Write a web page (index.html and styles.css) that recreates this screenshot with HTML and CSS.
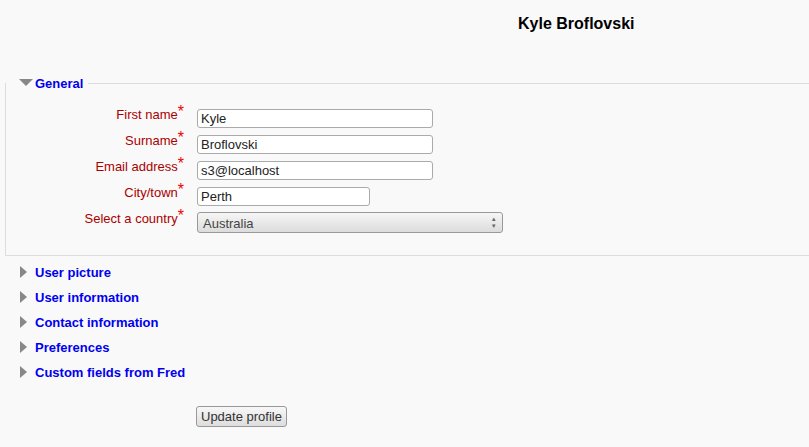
FILE: index.html
```html
<!DOCTYPE html>
<html lang="en">
<head>
    <meta charset="UTF-8">
    <title>Kyle Broflovski</title>
    <link rel="stylesheet" href="styles.css">
</head>
<body>
    <h2 class="username">Kyle Broflovski</h2>
    <form class="mform">
        <fieldset class="section">
            <legend><span class="toggle open"></span><a href="#">General</a></legend>
            <div class="row">
                <label>First name<span class="req">*</span></label>
                <input type="text" class="text" value="Kyle">
            </div>
            <div class="row">
                <label>Surname<span class="req">*</span></label>
                <input type="text" class="text" value="Broflovski">
            </div>
            <div class="row">
                <label>Email address<span class="req">*</span></label>
                <input type="text" class="text" value="s3@localhost">
            </div>
            <div class="row">
                <label>City/town<span class="req">*</span></label>
                <input type="text" class="text short" value="Perth">
            </div>
            <div class="row">
                <label>Select a country<span class="req">*</span></label>
                <div class="select">Australia<span class="arrows">&#9652;<br>&#9662;</span></div>
            </div>
        </fieldset>

        <ul class="collapsed">
            <li><span class="toggle"></span><a href="#">User picture</a></li>
            <li><span class="toggle"></span><a href="#">User information</a></li>
            <li><span class="toggle"></span><a href="#">Contact information</a></li>
            <li><span class="toggle"></span><a href="#">Preferences</a></li>
            <li><span class="toggle"></span><a href="#">Custom fields from Fred</a></li>
        </ul>

        <div class="buttons">
            <button type="button">Update profile</button>
        </div>
    </form>
</body>
</html>
```

FILE: styles.css
```css
body {
    font-family: "Liberation Sans", Arial, sans-serif;
    font-size: 13px;
    background: #f9f9f9;
    color: #333;
    margin: 0;
    padding: 0;
}
.username {
    font-size: 16px;
    font-weight: bold;
    color: #000;
    margin: 0;
    padding: 15px 0 0 518px;
    height: 76px;
    box-sizing: border-box;
}
.mform {
    margin: 0;
}
.section {
    margin: 0 -10px 0 5px;
    border: 1px solid #ddd;
    border-right: none;
    padding: 14px 0 20px 0;
}
.section legend {
    padding: 0 5px 0 13px;
    font-weight: bold;
    margin-left: 0;
}
a {
    color: #0000ee;
    text-decoration: none;
    font-weight: bold;
}
.toggle {
    display: inline-block;
    width: 0;
    height: 0;
    margin-right: 4px;
    vertical-align: 1px;
    border-top: 6px solid transparent;
    border-bottom: 6px solid transparent;
    border-left: 7px solid #888;
    margin-left: 2px;
}
.toggle.open {
    border-left: 7px solid transparent;
    border-right: 7px solid transparent;
    border-top: 7px solid #888;
    border-bottom: none;
    margin-left: 0;
    margin-right: 2px;
    vertical-align: 2px;
}
.row {
    display: flex;
    align-items: center;
    height: 26px;
}
.row label {
    width: 178px;
    text-align: right;
    color: #a00;
    padding-right: 13px;
    flex-shrink: 0;
    align-self: flex-start;
    margin-top: 2px;
}
.req {
    color: #e00;
    font-size: 16px;
    vertical-align: 2px;
    line-height: 0;
}
.text {
    font-family: "Liberation Sans", Arial, sans-serif;
    font-size: 13px;
    width: 236px;
    height: 19px;
    box-sizing: border-box;
    border: 1px solid #aaa;
    border-radius: 3px;
    padding: 1px 3px;
    background: #fff;
    color: #222;
    margin: 0;
}
.text.short {
    width: 173px;
}
.select {
    position: relative;
    width: 306px;
    height: 21px;
    box-sizing: border-box;
    border: 1px solid #999;
    border-radius: 3px;
    background: linear-gradient(#f6f6f6, #dcdcdc);
    padding: 3px 5px;
    color: #444;
}
.arrows {
    position: absolute;
    right: 6px;
    top: 2px;
    font-size: 7px;
    line-height: 7px;
    color: #666;
}
.collapsed {
    list-style: none;
    margin: 0;
    padding: 8px 0 0 20px;
}
.collapsed li {
    height: 25px;
    line-height: 18px;
}
.collapsed .toggle {
    margin-left: 0;
    margin-right: 8px;
    vertical-align: -1px;
}
.buttons {
    padding: 17px 0 0 196px;
}
button {
    font-family: "Liberation Sans", Arial, sans-serif;
    font-size: 13px;
    color: #333;
    height: 21px;
    padding: 0 4px;
    border: 1px solid #999;
    border-radius: 3px;
    background: linear-gradient(#f8f8f8, #ddd);
}
```
